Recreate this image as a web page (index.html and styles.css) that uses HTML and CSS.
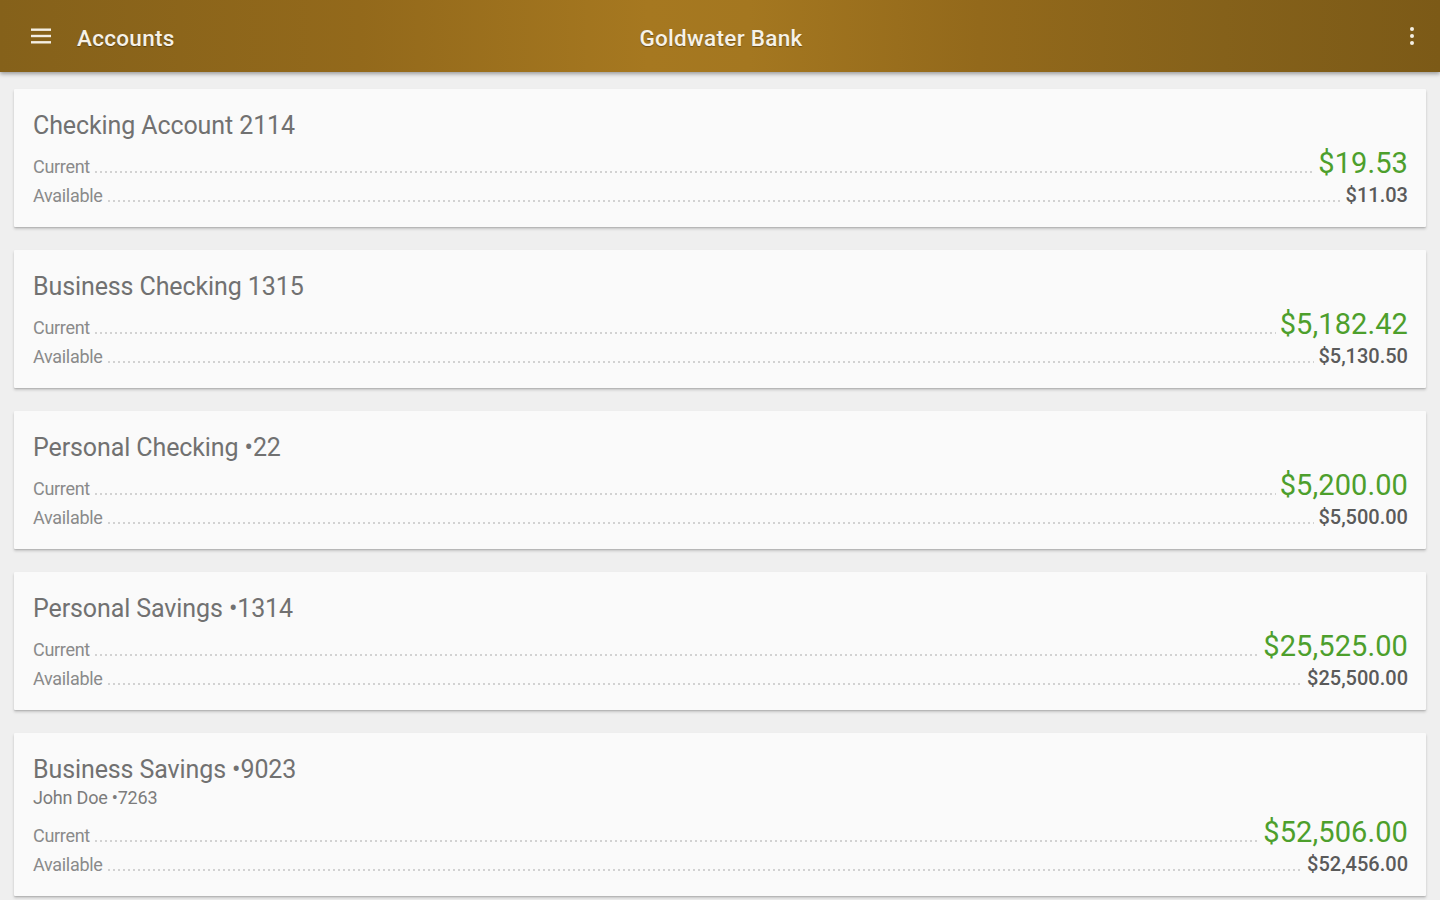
FILE: index.html
```html
<!DOCTYPE html>
<html lang="en">
<head>
<meta charset="utf-8">
<title>Goldwater Bank - Accounts</title>
<link rel="stylesheet" href="styles.css">
</head>
<body>
<header class="appbar">
  <div class="appbar-left">
    <svg class="icon-menu" width="22" height="18" viewBox="0 0 22 18" aria-hidden="true">
      <rect x="1" y="1.5" width="20" height="2.4" fill="#f4efe4"/>
      <rect x="1" y="7.8" width="20" height="2.4" fill="#f4efe4"/>
      <rect x="1" y="14.1" width="20" height="2.4" fill="#f4efe4"/>
    </svg>
    <span class="appbar-title">Accounts</span>
  </div>
  <div class="appbar-center">Goldwater Bank</div>
  <div class="appbar-right">
    <svg class="icon-more" width="6" height="20" viewBox="0 0 6 20" aria-hidden="true">
      <circle cx="3" cy="3" r="2" fill="#f4efe4"/>
      <circle cx="3" cy="10" r="2" fill="#f4efe4"/>
      <circle cx="3" cy="17" r="2" fill="#f4efe4"/>
    </svg>
  </div>
</header>

<main class="list">
  <section class="card">
    <h2 class="card-title">Checking Account 2114</h2>
    <div class="row row-current"><span class="label">Current</span><span class="leader"></span><span class="amount-current">$19.53</span></div>
    <div class="row row-available"><span class="label">Available</span><span class="leader"></span><span class="amount-available">$11.03</span></div>
  </section>

  <section class="card">
    <h2 class="card-title">Business Checking 1315</h2>
    <div class="row row-current"><span class="label">Current</span><span class="leader"></span><span class="amount-current">$5,182.42</span></div>
    <div class="row row-available"><span class="label">Available</span><span class="leader"></span><span class="amount-available">$5,130.50</span></div>
  </section>

  <section class="card">
    <h2 class="card-title">Personal Checking •22</h2>
    <div class="row row-current"><span class="label">Current</span><span class="leader"></span><span class="amount-current">$5,200.00</span></div>
    <div class="row row-available"><span class="label">Available</span><span class="leader"></span><span class="amount-available">$5,500.00</span></div>
  </section>

  <section class="card">
    <h2 class="card-title">Personal Savings •1314</h2>
    <div class="row row-current"><span class="label">Current</span><span class="leader"></span><span class="amount-current">$25,525.00</span></div>
    <div class="row row-available"><span class="label">Available</span><span class="leader"></span><span class="amount-available">$25,500.00</span></div>
  </section>

  <section class="card">
    <h2 class="card-title">Business Savings •9023</h2>
    <div class="card-sub">John Doe •7263</div>
    <div class="row row-current row-after-sub"><span class="label">Current</span><span class="leader"></span><span class="amount-current">$52,506.00</span></div>
    <div class="row row-available"><span class="label">Available</span><span class="leader"></span><span class="amount-available">$52,456.00</span></div>
  </section>
</main>
</body>
</html>
```
FILE: styles.css
```css
* { box-sizing: border-box; }

html, body {
  margin: 0;
  padding: 0;
}

body {
  background: #efefef;
  font-family: Roboto, "Liberation Sans", Arial, sans-serif;
  height: 900px;
  overflow: hidden;
}

.appbar {
  height: 72px;
  display: flex;
  align-items: center;
  padding: 0 26px 0 30px;
  background: linear-gradient(to right, #85611a 0%, #93691b 25%, #a67820 45%, #a47720 52%, #93691b 68%, #85611a 85%, #7c5a17 100%);
  box-shadow: 0 2px 4px rgba(0, 0, 0, 0.35);
  position: relative;
  z-index: 2;
  color: #f6f1e7;
}

.appbar-left {
  flex: 1;
  display: flex;
  align-items: center;
}

.icon-menu {
  display: block;
  margin-right: 25px;
}

.appbar-title,
.appbar-center {
  font-size: 22.5px;
  font-weight: 500;
  letter-spacing: 0.3px;
  text-shadow: 0 1px 1px rgba(0, 0, 0, 0.35);
  padding-top: 3px;
}

.appbar-center {
  flex: 0 0 auto;
  text-align: center;
  transform: translateX(-1px);
}

.appbar-right {
  flex: 1;
  display: flex;
  justify-content: flex-end;
}

.icon-more {
  display: block;
  transform: translateX(1px);
}

.list {
  padding: 17px 14px 0;
  display: flex;
  flex-direction: column;
  gap: 23px;
}

.card {
  background: #fafafa;
  padding: 22px 18px 19px 19px;
  box-shadow: 0 1px 1px rgba(0, 0, 0, 0.10), 0 2px 3px rgba(0, 0, 0, 0.18);
  border-radius: 1px;
}

.card-title {
  margin: 0;
  font-size: 25px;
  line-height: 30px;
  font-weight: 400;
  color: #717171;
  letter-spacing: -0.1px;
}

.card-sub {
  margin-top: 3px;
  font-size: 18px;
  line-height: 20px;
  color: #7c7c7c;
  letter-spacing: -0.2px;
}

.row {
  display: flex;
  align-items: baseline;
}

.row-current {
  margin-top: 7px;
  height: 30px;
  line-height: 30px;
}

.row-after-sub {
  margin-top: 9px;
}

.row-available {
  margin-top: 4px;
  height: 26px;
  line-height: 26px;
}

.label {
  font-size: 18px;
  color: #8a8a8a;
  letter-spacing: -0.3px;
}

.leader {
  flex: 1;
  height: 2px;
  margin: 0 4px 0 5px;
  background-image: linear-gradient(to right, #d2d2d2 40%, transparent 40%);
  background-size: 5px 2px;
  background-repeat: repeat-x;
}

.amount-current {
  font-size: 29px;
  color: #4d9f2c;
  letter-spacing: 0.1px;
}

.amount-available {
  font-size: 20px;
  font-weight: 500;
  color: #5a5a5a;
}
```
